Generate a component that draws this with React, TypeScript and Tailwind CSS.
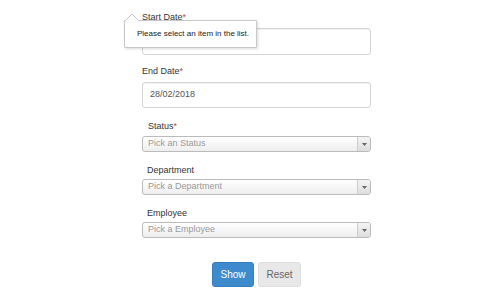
const labelCls = "block h-[11px] text-[9px] leading-[11px] text-[#333]";

function Field({ label, required }: { label: string; required?: boolean }) {
  return (
    <label className={labelCls}>
      {label}
      {required && <span className="text-[#b94a48]">*</span>}
    </label>
  );
}

function DateInput({ value, tall }: { value?: string; tall?: boolean }) {
  return (
    <div
      className={`mt-[5px] flex ${tall ? "h-[27px]" : "h-[26px]"} w-[229px] items-center rounded-[3px] border border-[#d4d4d4] bg-white pl-[7px] text-[9px] text-[#555] shadow-[inset_0_1px_1px_rgba(0,0,0,0.06)]`}
    >
      {value}
    </div>
  );
}

function Chosen({ placeholder }: { placeholder: string }) {
  return (
    <div className="flex h-[16px] w-[229px] items-stretch overflow-hidden rounded-[3px] border border-[#bbb] bg-gradient-to-b from-white to-[#eee]">
      <div className="flex flex-1 items-center pl-[5px] text-[9px] text-[#999]">{placeholder}</div>
      <div className="flex w-[13px] items-center justify-center border-l border-[#ccc] bg-gradient-to-b from-[#f4f4f4] to-[#ddd]">
        <svg width="5" height="3" viewBox="0 0 5 3">
          <path d="M0 0 L5 0 L2.5 3 Z" fill="#666" />
        </svg>
      </div>
    </div>
  );
}

export default function App() {
  return (
    <div
      className="relative h-[289px] w-[480px] overflow-hidden bg-white"
      style={{ fontFamily: '"Liberation Sans", Arial, sans-serif' }}
    >
      <div className="ml-[142px] w-[229px] pt-[12px]">
        <Field label="Start Date" required />
        <DateInput tall />

        <div className="mt-[11px]">
          <Field label="End Date" required />
        </div>
        <DateInput value="28/02/2018" />

        <div className="mt-[13px] pl-[6px]">
          <Field label="Status" required />
        </div>
        <div className="mt-[4px]">
          <Chosen placeholder="Pick an Status" />
        </div>

        <div className="mt-[13px] pl-[5px]">
          <Field label="Department" />
        </div>
        <div className="mt-[3px]">
          <Chosen placeholder="Pick a Department" />
        </div>

        <div className="mt-[13px] pl-[5px]">
          <Field label="Employee" />
        </div>
        <div className="mt-[3px]">
          <Chosen placeholder="Pick a Employee" />
        </div>

        <div className="mt-[24px] flex justify-center gap-[4px]">
          <button className="h-[25px] w-[42px] rounded-[3px] border border-[#357ebd] bg-[#3d8bcd] text-[10px] text-white">
            Show
          </button>
          <button className="h-[25px] w-[43px] rounded-[3px] border border-[#ddd] bg-[#e8e8e8] text-[10px] text-[#666]">
            Reset
          </button>
        </div>
      </div>

      {/* validation bubble */}
      <div className="absolute left-[124px] top-[20px] flex h-[28px] w-[133px] items-center rounded-[1px] border border-[#c8c8c8] bg-white pl-[12px] text-[8px] text-[#222] shadow-[1px_1px_3px_rgba(0,0,0,0.15)]">
        Please select an item in the list.
      </div>
      <svg className="absolute left-[124px] top-[13px]" width="18" height="8" viewBox="0 0 18 8">
        <path d="M1 8 L8 1 L15 8 Z" fill="#fff" />
        <path d="M1 8 L8 1 L15 8" fill="none" stroke="#c8c8c8" strokeWidth="1" />
      </svg>
    </div>
  );
}
